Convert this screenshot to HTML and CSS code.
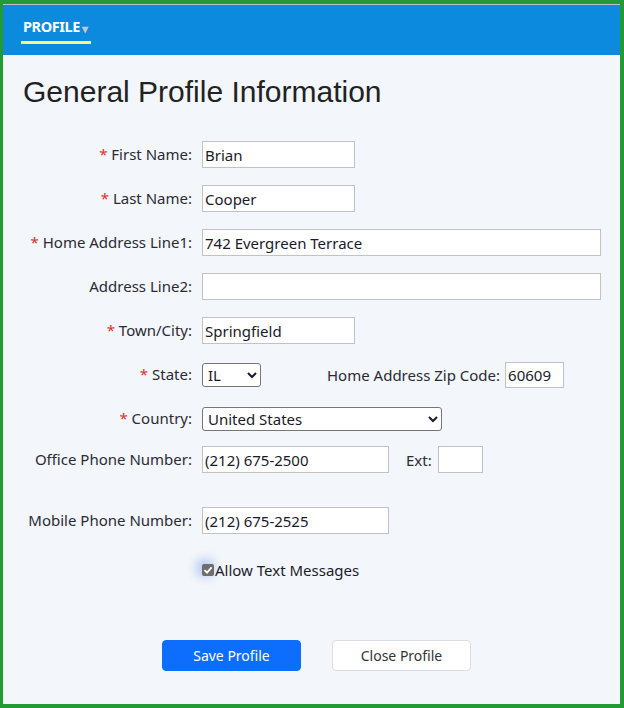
FILE: index.html
```html
<!DOCTYPE html>
<html lang="en">
<head>
    <meta charset="UTF-8">
    <meta name="viewport" content="width=device-width, initial-scale=1.0">
    <title>General Profile Information</title>
    <link rel="stylesheet" href="styles.css">
</head>
<body>
    <div class="frame">
        <div class="topbar">
            <a class="tab-active" href="#">PROFILE<span class="caret">&#9662;</span></a>
        </div>
        <div class="content">
            <h1>General Profile Information</h1>

            <div class="form-row">
                <label class="field-label" for="firstName"><span class="req">*</span> First Name:</label>
                <input type="text" id="firstName" class="input-short" value="Brian">
            </div>
            <div class="form-row">
                <label class="field-label" for="lastName"><span class="req">*</span> Last Name:</label>
                <input type="text" id="lastName" class="input-short" value="Cooper">
            </div>
            <div class="form-row">
                <label class="field-label" for="addr1"><span class="req">*</span> Home Address Line1:</label>
                <input type="text" id="addr1" class="input-long" value="742 Evergreen Terrace">
            </div>
            <div class="form-row">
                <label class="field-label" for="addr2">Address Line2:</label>
                <input type="text" id="addr2" class="input-long" value="">
            </div>
            <div class="form-row">
                <label class="field-label" for="city"><span class="req">*</span> Town/City:</label>
                <input type="text" id="city" class="input-short" value="Springfield">
            </div>
            <div class="form-row">
                <label class="field-label" for="state"><span class="req">*</span> State:</label>
                <select id="state" class="select-state">
                    <option>IL</option>
                    <option>CA</option>
                    <option>NY</option>
                </select>
                <label class="inline-label zip-label" for="zip">Home Address Zip Code:</label>
                <input type="text" id="zip" class="input-zip" value="60609">
            </div>
            <div class="form-row row-tight">
                <label class="field-label" for="country"><span class="req">*</span> Country:</label>
                <select id="country" class="select-country">
                    <option>United States</option>
                    <option>Canada</option>
                </select>
            </div>
            <div class="form-row row-phone">
                <label class="field-label" for="officePhone">Office Phone Number:</label>
                <input type="text" id="officePhone" class="input-phone" value="(212) 675-2500">
                <label class="inline-label ext-label" for="ext">Ext:</label>
                <input type="text" id="ext" class="input-ext" value="">
            </div>
            <div class="form-row">
                <label class="field-label" for="mobilePhone">Mobile Phone Number:</label>
                <input type="text" id="mobilePhone" class="input-phone" value="(212) 675-2525">
            </div>

            <div class="check-row">
                <span class="check-box">
                    <svg width="10" height="10" viewBox="0 0 10 10"><path d="M1.5 5.2 L4 7.6 L8.6 2.4" fill="none" stroke="#fff" stroke-width="1.8"/></svg>
                </span>
                <span class="check-text">Allow Text Messages</span>
            </div>

            <div class="actions">
                <button class="btn btn-save">Save Profile</button>
                <button class="btn btn-close">Close Profile</button>
            </div>
        </div>
    </div>
</body>
</html>
```

FILE: styles.css
```css
html, body {
    margin: 0;
    padding: 0;
}
body {
    font-family: "Noto Sans", "Open Sans", sans-serif;
    color: #2b2b35;
}
.frame {
    width: 624px;
    height: 708px;
    box-sizing: border-box;
    border-style: solid;
    border-color: #239b35;
    border-width: 4px 4px 4px 3px;
    background: #f3f6fa;
    display: flex;
    flex-direction: column;
}
.topbar {
    height: 51px;
    flex-shrink: 0;
    box-sizing: border-box;
    border-top: 1px solid #b9c4cc;
    background: #0b8ade;
    padding-left: 18px;
    display: flex;
    align-items: flex-end;
}
.tab-active {
    display: block;
    color: #fff;
    text-decoration: none;
    font-weight: bold;
    font-size: 14.5px;
    letter-spacing: -0.4px;
    padding: 0 3px 3px 2px;
    line-height: 20px;
    border-bottom: 3px solid #fdf88a;
    margin-bottom: 11px;
}
.caret {
    font-size: 12px;
    color: #c3c8cf;
    margin-left: 2px;
    position: relative;
    top: 1px;
}
.content {
    flex: 1;
    padding: 0 19px;
}
h1 {
    font-family: "Liberation Sans", Arial, sans-serif;
    font-weight: normal;
    font-size: 30px;
    color: #222;
    margin: 20px 0 32px 1px;
    line-height: 34px;
}
.form-row {
    display: flex;
    align-items: center;
    height: 27px;
    margin-bottom: 17px;
    font-size: 15px;
}
.row-tight {
    margin-bottom: 14px;
}
.row-phone {
    margin-bottom: 34px;
}
.field-label {
    width: 180px;
    box-sizing: border-box;
    padding-right: 10px;
    text-align: right;
    flex-shrink: 0;
    position: relative;
    top: -1px;
}
.req {
    color: #e0302b;
}
input[type="text"] {
    font-family: "Noto Sans", "Open Sans", sans-serif;
    font-size: 15px;
    color: #1a1a2a;
    height: 27px;
    box-sizing: border-box;
    border: 1px solid #c2c2c2;
    border-radius: 0;
    padding: 0 2px;
    background: #fff;
    margin: 0;
}
.input-short {
    width: 153px;
}
.input-long {
    width: 400px;
}
.input-phone {
    width: 187px;
}
.input-zip {
    width: 59px;
    height: 26px !important;
}
.input-ext {
    width: 45px;
}
select {
    font-family: "Noto Sans", "Open Sans", sans-serif;
    font-size: 15px;
    color: #1a1a2a;
    height: 24px;
    border: 1px solid #767676;
    border-radius: 3px;
    background: #fff;
    padding: 0 1px;
    margin: 0;
}
.select-state {
    width: 59px;
}
.select-country {
    width: 240px;
}
.inline-label {
    flex-shrink: 0;
}
.zip-label {
    margin-left: 66px;
    margin-right: 5px;
}
.ext-label {
    margin-left: 17px;
    margin-right: 6px;
}
.check-row {
    display: flex;
    align-items: center;
    margin-left: 180px;
    margin-top: 26px;
    font-size: 15px;
    height: 20px;
}
.check-box {
    width: 12px;
    height: 12px;
    border-radius: 2px;
    background: #6d6d6d;
    display: flex;
    align-items: center;
    justify-content: center;
    box-shadow: -3px -2px 8px 3px rgba(120, 160, 240, 0.45);
    margin-right: 1px;
}
.check-text {
    color: #1c1c2c;
}
.actions {
    display: flex;
    gap: 31px;
    margin-top: 60px;
    margin-left: 140px;
}
.btn {
    width: 139px;
    height: 31px;
    font-family: "Noto Sans", "Open Sans", sans-serif;
    font-size: 14px;
    border-radius: 4px;
    cursor: pointer;
    padding: 0;
}
.btn-save {
    background: #0d6efd;
    color: #fff;
    border: 1px solid #0d6efd;
}
.btn-close {
    background: #fff;
    color: #333;
    border: 1px solid #dadde2;
}
```
